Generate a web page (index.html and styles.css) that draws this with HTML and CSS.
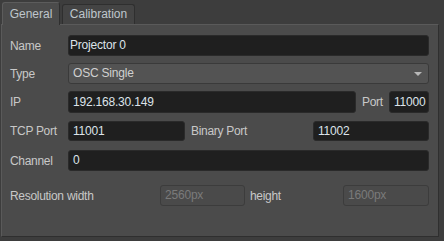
FILE: index.html
```html
<!DOCTYPE html>
<html>
<head>
<meta charset="utf-8">
<link rel="stylesheet" href="styles.css">
</head>
<body>
<div class="window">
  <div class="tabs">
    <div class="tab active">General</div>
    <div class="tab">Calibration</div>
  </div>
  <div class="panel">
    <div class="row r-name">
      <span class="label">Name</span>
      <div class="input grow name-input">Projector 0</div>
    </div>
    <div class="row r-type">
      <span class="label">Type</span>
      <div class="select grow">OSC Single<span class="arrow"></span></div>
    </div>
    <div class="row r-ip">
      <span class="label">IP</span>
      <div class="input ip">192.168.30.149</div>
      <span class="label-inline port-label">Port</span>
      <div class="input port">11000</div>
    </div>
    <div class="row r-tcp">
      <span class="label">TCP Port</span>
      <div class="input tcp">11001</div>
      <span class="label-inline binary-label">Binary Port</span>
      <div class="input grow">11002</div>
    </div>
    <div class="row r-chan">
      <span class="label">Channel</span>
      <div class="input grow">0</div>
    </div>
    <div class="row r-res">
      <span class="label">Resolution</span>
      <span class="label-inline width-label">width</span>
      <div class="input disabled w">2560px</div>
      <span class="label-inline height-label">height</span>
      <div class="input disabled grow">1600px</div>
    </div>
  </div>
</div>
</body>
</html>
```
FILE: styles.css
```css
* { box-sizing: border-box; }
html, body {
  margin: 0;
  padding: 0;
  width: 444px;
  height: 241px;
  background: #3d3d3d;
  font-family: "Liberation Sans", Arial, sans-serif;
  font-size: 11px;
  color: #cdcdcd;
  overflow: hidden;
}
.window {
  padding: 2px 0 0 1px;
}
.tabs {
  display: flex;
  align-items: flex-end;
  height: 22px;
  padding-left: 1px;
  gap: 2px;
  position: relative;
  z-index: 1;
}
.tab {
  height: 20px;
  width: 73px;
  text-align: center;
  line-height: 19px;
  background: #444444;
  border: 1px solid #2f2f2f;
  border-bottom: none;
  border-radius: 3px 3px 0 0;
  color: #bfc6cc;
  font-size: 12px;
}
.tab.active {
  width: 58px;
  height: 23px;
  line-height: 22px;
  background: #4b4b4b;
  border-color: #5c5c5c #2f2f2f #2f2f2f #5c5c5c;
  margin-bottom: -1px;
}
.panel {
  width: 438px;
  height: 213px;
  background: #4b4b4b;
  border: 1px solid #2f2f2f;
  border-top-color: #5a5a5a;
  border-left-color: #5a5a5a;
  padding: 10px 9px 0 8px;
  display: flex;
  flex-direction: column;
}
.row {
  display: flex;
  align-items: center;
  height: 21px;
  flex: none;
}
.r-type { margin-top: 7px; }
.r-ip { margin-top: 7px; height: 22px; }
.r-ip .input { height: 22px; line-height: 20px; }
.r-tcp { margin-top: 8px; height: 20px; }
.r-tcp .input { height: 20px; line-height: 18px; }
.r-chan { margin-top: 9px; }
.r-res { margin-top: 14px; }
.label {
  width: 58px;
  flex: none;
  color: #c8c8c8;
  font-size: 12px;
  letter-spacing: -0.3px;
}
.label-inline {
  color: #c8c8c8;
  flex: none;
  font-size: 12px;
  letter-spacing: -0.3px;
}
.input, .select {
  height: 21px;
  border-radius: 3px;
  background: #1f1f1f;
  border: 1px solid #2a2a2a;
  color: #dde3ea;
  padding: 0 4px;
  line-height: 19px;
  white-space: nowrap;
  flex: none;
  font-size: 12px;
  letter-spacing: -0.2px;
}
.name-input { padding-left: 1px; }
.grow { flex: 1; }
.select {
  position: relative;
  background: #535353;
  border-color: #3a3a3a;
  color: #d0d0d0;
  padding-left: 4px;
}
.arrow {
  position: absolute;
  right: 6px;
  top: 8px;
  width: 0;
  height: 0;
  border-left: 4px solid transparent;
  border-right: 4px solid transparent;
  border-top: 4px solid #b8b8b8;
}
.ip { width: 288px; }
.port-label { margin-left: 6px; width: 27px; }
.port { width: 40px; }
.tcp { width: 117px; }
.binary-label { margin-left: 6px; width: 122px; }
.width-label { width: 93px; margin-left: -1px; }
.w { width: 85px; }
.height-label { margin-left: 5px; width: 93px; }
.input.disabled {
  background: #4a4a4a;
  border-color: #3c3c3c;
  color: #7a7a7a;
}
```
